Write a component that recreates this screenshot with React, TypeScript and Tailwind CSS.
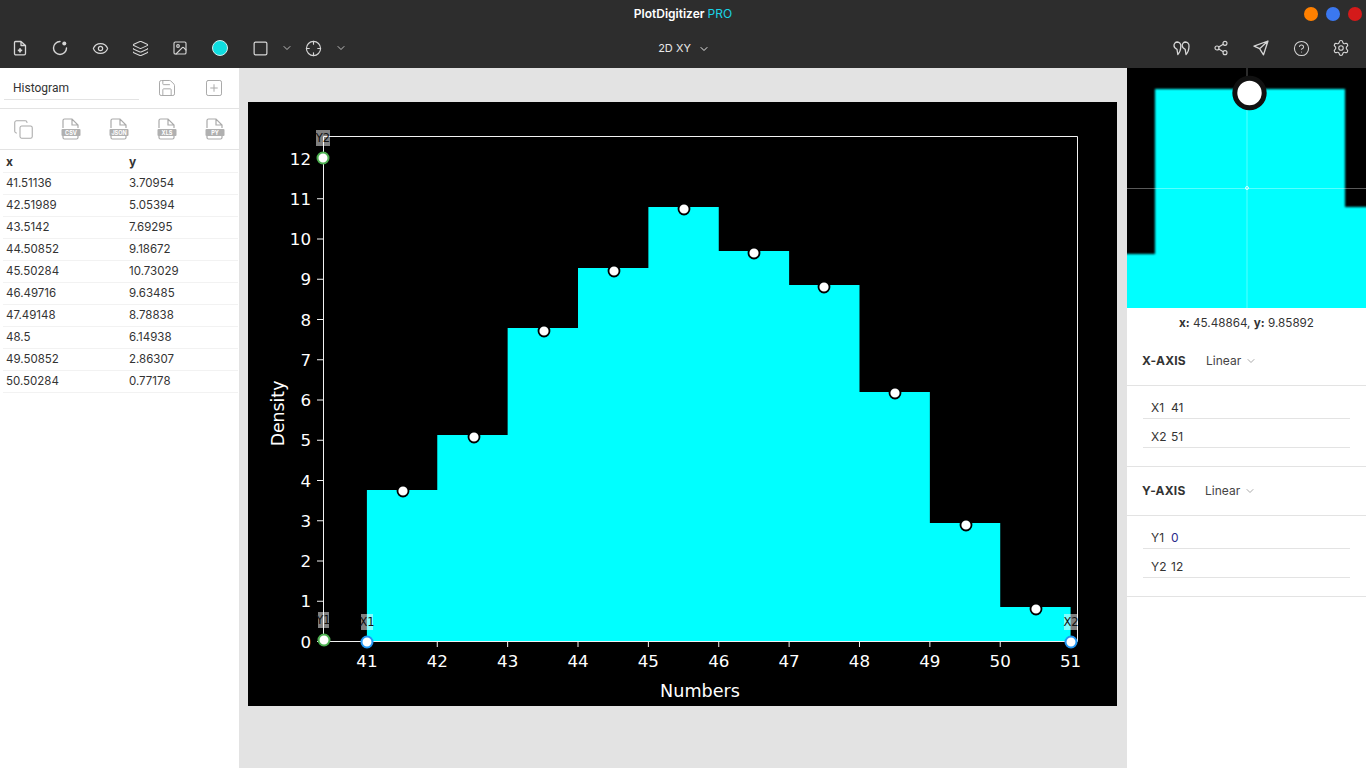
import React from "react";
import { ChevronDown, Eye, Layers, Image as ImageIcon, Square, Share2, CircleHelp, Settings, Save, SquarePlus, Copy, Crosshair } from "lucide-react";

const data = [
  ["41.51136", "3.70954"], ["42.51989", "5.05394"], ["43.5142", "7.69295"], ["44.50852", "9.18672"], ["45.50284", "10.73029"],
  ["46.49716", "9.63485"], ["47.49148", "8.78838"], ["48.5", "6.14938"], ["49.50852", "2.86307"], ["50.50284", "0.77178"],
];
const font = "font-['Inter','Liberation_Sans',sans-serif]";

const xTicks = [41, 42, 43, 44, 45, 46, 47, 48, 49, 50, 51];
const xp = (v: number) => 366.9 + (v - 41) * 70.37;
const yp = (v: number) => 641 - v * 40.25;
const tops = [490, 435, 328, 268, 207, 251, 285, 392, 523, 607];
const dots: [number, number][] = [[403, 491], [474, 437], [544, 331], [614, 271], [684, 209], [754, 253], [824, 287], [895, 393], [966, 525], [1036, 609]];
const histogram =
  `M${xp(41)} 641` + tops.map((t, i) => `V${t}H${xp(42 + i)}`).join("") + "V641Z";

function TB({ children }: { children: React.ReactNode }) {
  return <div className="w-10 h-10 flex items-center justify-center text-[#d6d6d6]">{children}</div>;
}

function Chev({ className = "" }: { className?: string }) {
  return <div className={`w-[13px] h-10 flex items-center justify-center text-[#d6d6d6] ${className}`}><ChevronDown size={12} strokeWidth={1.7} /></div>;
}

function FileIcon({ label }: { label: string }) {
  return (
    <svg width="20" height="22" viewBox="0 0 20 22" fill="none">
      <path d="M2 10V2.500A1.500 1.500 0 0 1 3.500 1H11l6 6v3M2 18v1.500A1.500 1.500 0 0 0 3.500 21h12a1.500 1.500 0 0 0 1.500-1.500V18M11 1v6h6" stroke="#aaa" strokeWidth="1.200" />
      <rect x="0.500" y="11" width="19" height="7" rx="1" fill="#b0b0b0" />
      <text x="10" y="16.700" textAnchor="middle" fontSize="5.500" fontWeight="700" fill="#fff" fontFamily="Inter, sans-serif">{label}</text>
    </svg>
  );
}

function Plot() {
  return (
    <svg viewBox="248 102 869 604" className="w-[869px] h-[604px] block bg-black shrink-0">
      <path d={histogram} fill="#00ffff" />
      <g stroke="#f2f2f2" strokeWidth="1" fill="none">
        <path d="M323.500 136.500H1077.500V641.500H323.500Z" />
        {xTicks.map((t) => <path key={t} d={`M${xp(t)} 641V647`} />)}
        {Array.from({ length: 13 }, (_, i) => <path key={i} d={`M317 ${yp(i) + 0.5}H323`} />)}
      </g>
      <g fill="#fff" fontFamily="'DejaVu Sans', sans-serif" fontSize="16.700">
        {xTicks.map((t) => <text key={t} x={xp(t)} y={667} textAnchor="middle">{t}</text>)}
        {Array.from({ length: 13 }, (_, i) => <text key={i} x={311} y={yp(i) + 6.500} textAnchor="end">{i}</text>)}
        <text x={700} y={697} textAnchor="middle" fontSize="17.600">Numbers</text>
        <text x={0} y={0} textAnchor="middle" fontSize="17.300" transform="translate(284 413.500) rotate(-90)">Density</text>
      </g>
      {dots.map(([x, y], i) => <circle key={i} cx={x} cy={y} r="5.500" fill="#fff" stroke="#000" strokeWidth="1.800" />)}
      <g fontFamily="'DejaVu Sans', sans-serif" fontSize="11.500" fill="#111">
        <rect x="316" y="130" width="14" height="16" fill="#fff" fillOpacity=".5" />
        <text x="323" y="142" textAnchor="middle">Y2</text>
        <rect x="318" y="612" width="11" height="16" fill="#fff" fillOpacity=".5" />
        <text x="323.500" y="624" textAnchor="middle">Y1</text>
        <rect x="361" y="614" width="12" height="16" fill="#fff" fillOpacity=".5" />
        <text x="367" y="626" textAnchor="middle">X1</text>
        <rect x="1064" y="614" width="14" height="16" fill="#fff" fillOpacity=".5" />
        <text x="1071" y="626" textAnchor="middle">X2</text>
      </g>
      <circle cx="323" cy="158" r="5.500" fill="#fff" stroke="#4caf50" strokeWidth="2" />
      <circle cx="324" cy="640" r="5.500" fill="#fff" stroke="#4caf50" strokeWidth="2" />
      <circle cx="367" cy="642" r="5.500" fill="#fff" stroke="#2196f3" strokeWidth="2" />
      <circle cx="1071" cy="642" r="5.500" fill="#fff" stroke="#2196f3" strokeWidth="2" />
    </svg>
  );
}

function Loupe() {
  return (
    <svg viewBox="0 0 239 240" className="w-[239px] h-[240px] block bg-black">
      <defs><filter id="b"><feGaussianBlur stdDeviation="0.900" /></filter></defs>
      <path d="M-5 186H28V21H218V139H245V245H-5Z" fill="#00ffff" filter="url(#b)" />
      <path d="M120 0V240M0 120.500H239" stroke="#fff" strokeOpacity=".35" strokeWidth="1" />
      <circle cx="120" cy="120" r="1.500" fill="none" stroke="#fff" strokeWidth=".8" />
      <circle cx="122.500" cy="25" r="14.700" fill="#fff" stroke="#111" strokeWidth="5" />
    </svg>
  );
}

function AxisBlock({ name, rows, head, labelW, total }: { name: string; rows: [string, string][]; head: string; labelW: string; total: string }) {
  return (
    <div className={`border-b border-[#e3e3e3] ${total}`}>
      <div className={`flex items-center border-b border-[#e3e3e3] pl-[15px] ${head}`}>
        <span className={`text-[12px] font-bold text-[#333] tracking-[0.2px] ${labelW}`}>{name}</span>
        <span className="text-[12px] text-[#444]">Linear</span>
        <ChevronDown size={12} className="ml-[4px] text-[#aaa]" />
      </div>
      <div className="pt-[4px] pl-[16px] pr-[16px]">
        {rows.map(([a, b]) => (
          <div key={a} className="h-[29px] flex items-center pt-[8px] border-b border-[#e3e3e3] text-[12px] text-[#333] pl-[8px]">
            <span className="w-[20px]">{a}</span>
            <span className={b === "0" ? "text-[#2a2a8a]" : ""}>{b}</span>
          </div>
        ))}
      </div>
    </div>
  );
}

export default function App() {
  return (
    <div className={`w-[1366px] h-[768px] overflow-hidden flex flex-col bg-[#e3e3e3] ${font}`}>
      <header className="h-[68px] bg-[#2d2d2d] shrink-0">
        <div className="h-[28px] grid grid-cols-[1fr_auto_1fr] items-center">
          <div />
          <div className="text-[12px] font-semibold text-white">PlotDigitizer <span className="font-normal text-[#19d3e6]">PRO</span></div>
          <div className="flex justify-end gap-[8px] pr-[4px]">
            <span className="w-[14px] h-[14px] rounded-full bg-[#ff8000]" />
            <span className="w-[14px] h-[14px] rounded-full bg-[#3b78f0]" />
            <span className="w-[14px] h-[14px] rounded-full bg-[#d41a1a]" />
          </div>
        </div>
        <div className="h-[40px] grid grid-cols-[1fr_auto_1fr] items-center">
          <div className="flex items-center">
            <TB>
              <svg width="16" height="16" viewBox="0 0 16 16" fill="none" stroke="currentColor" strokeWidth="1.300" strokeLinejoin="round">
                <path d="M3.500 1.500H9L13.500 5.500V13.500A1.300 1.300 0 0 1 12.200 14.800H3.800A1.300 1.300 0 0 1 2.500 13.500V2.500A1 1 0 0 1 3.500 1.500ZM9 1.500V5.500H13.500" />
                <path d="M8 8.200V12.600M5.800 10.400H10.200" strokeWidth="1.800" />
              </svg>
            </TB>
            <TB>
              <svg width="16" height="16" viewBox="0 0 16 16" fill="none" stroke="currentColor" strokeWidth="1.400" strokeLinecap="round">
                <path d="M14.500 8A6.500 6.500 0 1 1 8 1.500" />
                <circle cx="12.300" cy="3.500" r="2" fill="currentColor" stroke="none" />
              </svg>
            </TB>
            <TB><Eye size={17} strokeWidth={1.700} /></TB>
            <TB><Layers size={17} strokeWidth={1.500} /></TB>
            <TB><ImageIcon size={16} strokeWidth={1.700} /></TB>
            <TB><span className="w-[16px] h-[16px] rounded-full bg-[#0fdde0] border border-[#cfeeee]" /></TB>
            <TB><Square size={17} strokeWidth={1.700} /></TB>
            <Chev />
            <TB><Crosshair size={17} strokeWidth={1.600} /></TB>
            <Chev className="ml-[1px]" />
          </div>
          <div className="flex items-center pl-[2px] pt-[1px] text-[11px] text-[#e8e8e8]">
            <span>2D XY</span>
            <ChevronDown size={12} className="ml-[7px]" />
          </div>
          <div className="flex items-center justify-end pr-[5px]">
            <TB>
              <svg width="17" height="15" viewBox="0 0 17 15" fill="none" stroke="currentColor" strokeWidth="1.300" strokeLinejoin="round">
                <path d="M4.300 1A3.400 3.400 0 0 0 1 4.600C1 6.700 2.700 7.800 4 8.300L4.800 13.500C6.600 11.600 7.800 8.300 7.800 5A3.800 3.800 0 0 0 4.300 1Z" />
                <path d="M12.500 1A3.400 3.400 0 0 0 9.200 4.600C9.200 6.700 10.900 7.800 12.200 8.300L13 13.500C14.800 11.600 16 8.300 16 5A3.800 3.800 0 0 0 12.500 1Z" />
              </svg>
            </TB>
            <TB><Share2 size={16} strokeWidth={1.700} /></TB>
            <TB>
              <svg width="16" height="16" viewBox="0 0 16 16" fill="none" stroke="currentColor" strokeWidth="1.300" strokeLinejoin="round">
                <path d="M15 1L1 6.200L6.600 8.700L10.500 14.800L15 1ZM15 1L6.600 8.700" />
              </svg>
            </TB>
            <TB><CircleHelp size={17} strokeWidth={1.500} /></TB>
            <TB><Settings size={18} strokeWidth={1.500} /></TB>
          </div>
        </div>
      </header>
      <div className="flex flex-1 min-h-0">
        <aside className="w-[239px] bg-white shrink-0">
          <div className="h-[41px] border-b border-[#e3e3e3] flex items-center pl-[4px]">
            <div className="w-[135px] h-[24px] border-b border-[#e3e3e3] pl-[9px] text-[12px] text-[#333] flex items-center font-['Roboto',sans-serif]">Histogram</div>
            <div className="w-[56px] flex justify-center text-[#aaa]"><Save size={20} strokeWidth={1.200} /></div>
            <div className="w-[40px] flex justify-center text-[#aaa] -ml-[1px]"><SquarePlus size={20} strokeWidth={1.200} /></div>
          </div>
          <div className="h-[41px] border-b border-[#e3e3e3] flex items-center gap-[28px] pl-[13px] text-[#aaa]">
            <Copy size={21} strokeWidth={1.200} className="-mr-[1px]" />
            <FileIcon label="CSV" />
            <FileIcon label="JSON" />
            <FileIcon label="XLS" />
            <FileIcon label="PY" />
          </div>
          <div className="h-[23px] ml-[3px] mr-[1px] pt-[1px] flex items-center border-b border-[#f2f2f2] pl-[3px] text-[12px] font-bold text-[#333]">
            <span className="w-[123px]">x</span><span>y</span>
          </div>
          {data.map(([x, y]) => (
            <div key={x} className="h-[22px] ml-[3px] mr-[1px] flex items-center border-b border-[#f2f2f2] pl-[3px] text-[11.500px] text-[#333]">
              <span className="w-[123px]">{x}</span><span>{y}</span>
            </div>
          ))}
        </aside>
        <main className="flex-1 pt-[34px] pl-[9px]">
          <Plot />
        </main>
        <aside className="w-[239px] bg-white shrink-0">
          <Loupe />
          <div className="h-[28px] pt-[4px] flex items-center justify-center text-[11.700px] text-[#333]">
            <span><b className="font-bold">x:</b> 45.48864, <b className="font-bold">y:</b> 9.85892</span>
          </div>
          <AxisBlock name="X-AXIS" total="h-[131px]" head="h-[50px]" labelW="w-[64px]" rows={[["X1", "41"], ["X2", "51"]]} />
          <AxisBlock name="Y-AXIS" total="h-[130px]" head="h-[49px]" labelW="w-[63px]" rows={[["Y1", "0"], ["Y2", "12"]]} />
        </aside>
      </div>
    </div>
  );
}
